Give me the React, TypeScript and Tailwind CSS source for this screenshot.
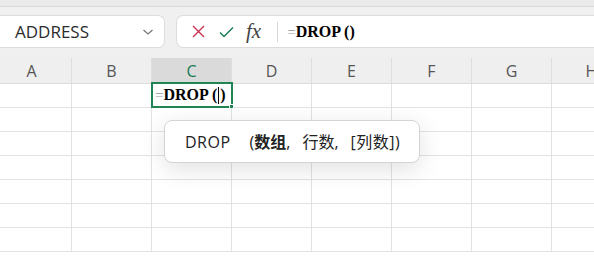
import React from 'react';

const COLS = ['A', 'B', 'C', 'D', 'E', 'F', 'G', 'H'];
const ROWS = [1, 2, 3, 4, 5, 6, 7];

const uiFont = { fontFamily: '"Open Sans", "Noto Sans", sans-serif' };
const serifFont = { fontFamily: '"Liberation Serif", serif' };
const cjkFont = { fontFamily: '"Open Sans", "Noto Sans CJK SC", sans-serif' };

const FormulaBar: React.FC = () => (
  <div className="h-[56px] bg-[#f0f0f0] flex flex-col">
    <div className="h-[7px] bg-[#eaeaea] border-b border-[#d8d8d8]" />
    <div className="flex gap-[11px] pt-[8px]">
      <div className="w-[165px] h-[33px] bg-white border border-l-0 border-[#dcdcdc] rounded-r-[7px] flex items-center justify-between pl-[15px] pr-[10px]">
        <span className="text-[17px] text-[#2b2b2b] pt-px" style={uiFont}>ADDRESS</span>
        <svg width="12" height="8" viewBox="0 0 12 8" fill="none" stroke="#777" strokeWidth="1.3">
          <path d="M1.5 2 L6 6 L10.5 2" />
        </svg>
      </div>
      <div className="flex-1 h-[33px] bg-white border border-r-0 border-[#dcdcdc] rounded-l-[7px] flex items-center">
        <div className="flex items-center gap-[14px] pl-[15px]">
          <svg width="13" height="13" viewBox="0 0 13 13" stroke="#c8324e" strokeWidth="1.4">
            <path d="M1 1 L12 12 M12 1 L1 12" />
          </svg>
          <svg width="15" height="12" viewBox="0 0 15 12" fill="none" stroke="#1b7d52" strokeWidth="1.5">
            <path d="M1 6.5 L5 10.5 L14 1.5" />
          </svg>
          <span className="text-[21px] italic text-[#444] leading-none -ml-[2px]" style={serifFont}>fx</span>
        </div>
        <div className="w-px h-[20px] bg-[#d6d6d6] ml-[16px]" />
        <div className="pl-[9px] flex items-baseline">
          <span className="text-[15px] text-[#999]" style={serifFont}>=</span>
          <span className="text-[16px] font-bold text-black" style={serifFont}>DROP ()</span>
        </div>
      </div>
    </div>
  </div>
);

const Header: React.FC = () => (
  <div className="flex h-[28px] -ml-[8px] bg-[#efefef] border-b border-[#dcdcdc]">
    {COLS.map((c) => (
      <div
        key={c}
        className={`w-[80px] shrink-0 flex items-center justify-center border-r border-[#dedede] mt-[2px] text-[16px] ${
          c === 'C' ? 'bg-[#dadada] text-[#187a55]' : 'text-[#555]'
        }`}
        style={uiFont}
      >
        {c}
      </div>
    ))}
  </div>
);

const Grid: React.FC = () => (
  <div className="-ml-[8px]">
    {ROWS.map((r) => (
      <div key={r} className="flex h-[24px] border-b border-[#e2e2e2]">
        {COLS.map((c) => (
          <div key={c} className="w-[80px] shrink-0 border-r border-[#e2e2e2] relative">
            {r === 1 && c === 'C' && (
              <div className="absolute -left-[1px] -top-[2px] w-[82px] h-[26px] border-2 border-[#1f8556] flex items-center pl-[2px]">
                <span className="text-[15px] text-[#999]" style={serifFont}>=</span>
                <span className="text-[16px] font-bold text-black" style={serifFont}>DROP (</span>
                <span className="w-px h-[17px] bg-black mx-px" />
                <span className="text-[16px] font-bold text-black" style={serifFont}>)</span>
                <span className="absolute -right-[3px] -bottom-[3px] w-[5px] h-[5px] bg-[#1f8556] border border-white" />
              </div>
            )}
          </div>
        ))}
      </div>
    ))}
  </div>
);

export default function App() {
  return (
    <div className="w-[594px] h-[260px] overflow-hidden bg-white relative">
      <FormulaBar />
      <Header />
      <Grid />
      <div
        className="absolute left-[164px] top-[120px] w-[256px] h-[43px] bg-white border border-[#d4d4d4] rounded-[8px] shadow-[0_6px_24px_rgba(0,0,0,0.12)] flex items-center pl-[20px] text-[16px] text-[#222]"
        style={cjkFont}
      >
        <span className="tracking-[0.5px]">DROP</span>
        <span className="ml-[19px]">(</span>
        <span className="font-bold">数组</span>
        <span>,</span>
        <span className="ml-[12px]">行数</span>
        <span>,</span>
        <span className="ml-[12px] tracking-[0.5px]">[列数])</span>
      </div>
    </div>
  );
}
